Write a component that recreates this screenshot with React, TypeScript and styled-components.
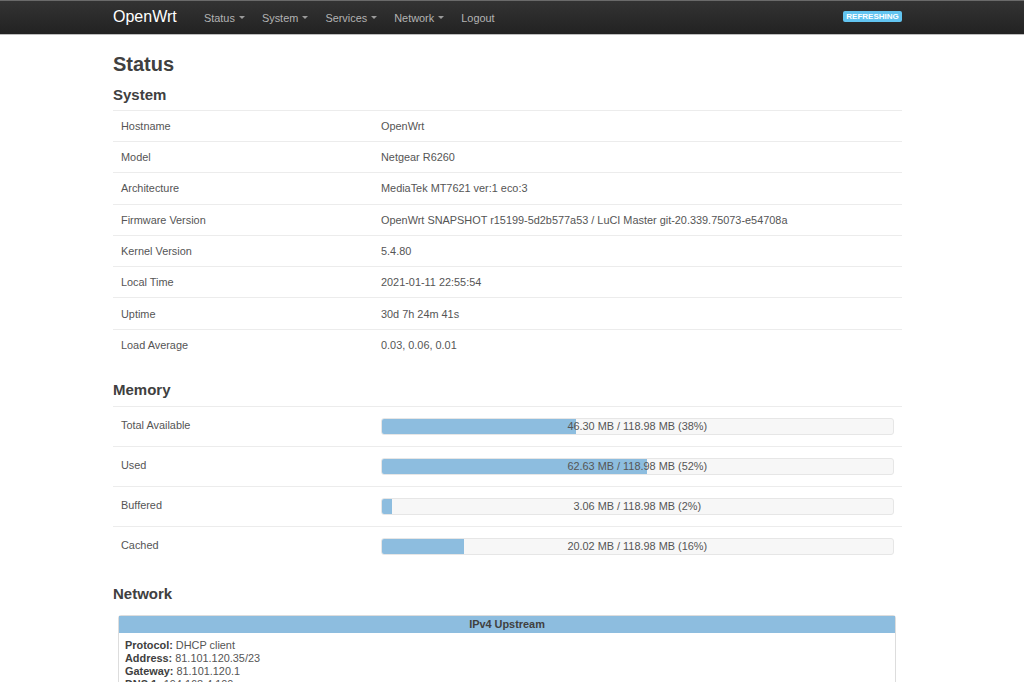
import styled, { createGlobalStyle } from 'styled-components';

const GlobalStyle = createGlobalStyle`
  html, body {
    margin: 0;
    height: 682px;
    overflow: hidden;
    background: #fff;
    color: #404040;
    font-family: "Liberation Sans", Arial, sans-serif;
    font-size: 10.9px;
  }
`;

const systemRows = [
  ['Hostname', 'OpenWrt'],
  ['Model', 'Netgear R6260'],
  ['Architecture', 'MediaTek MT7621 ver:1 eco:3'],
  ['Firmware Version', 'OpenWrt SNAPSHOT r15199-5d2b577a53 / LuCI Master git-20.339.75073-e54708a'],
  ['Kernel Version', '5.4.80'],
  ['Local Time', '2021-01-11 22:55:54'],
  ['Uptime', '30d 7h 24m 41s'],
  ['Load Average', '0.03, 0.06, 0.01'],
];

const memoryRows = [
  { label: 'Total Available', text: '46.30 MB / 118.98 MB (38%)', percent: 38 },
  { label: 'Used', text: '62.63 MB / 118.98 MB (52%)', percent: 52 },
  { label: 'Buffered', text: '3.06 MB / 118.98 MB (2%)', percent: 2 },
  { label: 'Cached', text: '20.02 MB / 118.98 MB (16%)', percent: 16 },
];

const upstream = [
  ['Protocol:', 'DHCP client'],
  ['Address:', '81.101.120.35/23'],
  ['Gateway:', '81.101.120.1'],
  ['DNS 1:', '194.168.4.100'],
];

const navItems = ['Status', 'System', 'Services', 'Network'];

export default function App() {
  return (
    <>
      <GlobalStyle />
      <NavBar>
        <NavInner>
          <Brand>OpenWrt</Brand>
          <NavList>
            {navItems.map(item => (
              <NavItem key={item}>
                {item}
                <Caret />
              </NavItem>
            ))}
            <NavItem>Logout</NavItem>
          </NavList>
          <Badge>REFRESHING</Badge>
        </NavInner>
      </NavBar>

      <Main>
        <PageTitle>Status</PageTitle>

        <SectionTitle>System</SectionTitle>
        <Table>
          {systemRows.map(([label, value]) => (
            <Row key={label}>
              <Label>{label}</Label>
              <Value>{value}</Value>
            </Row>
          ))}
        </Table>

        <MemoryTitle>Memory</MemoryTitle>
        <Table>
          {memoryRows.map(row => (
            <MemoryRow key={row.label}>
              <MemoryLabel>{row.label}</MemoryLabel>
              <Progress>
                <ProgressFill style={{ width: `${row.percent}%` }} />
                <ProgressText>{row.text}</ProgressText>
              </Progress>
            </MemoryRow>
          ))}
        </Table>

        <NetworkTitle>Network</NetworkTitle>
        <Panel>
          <PanelHead>IPv4 Upstream</PanelHead>
          <PanelBody>
            {upstream.map(([key, value]) => (
              <div key={key}>
                <strong>{key}</strong> {value}
              </div>
            ))}
          </PanelBody>
        </Panel>
      </Main>
    </>
  );
}

const NavBar = styled.header`
  height: 35px;
  box-sizing: border-box;
  border-top: 1px solid #6a6a6a;
  border-bottom: 1px solid #bdbdbd;
  background: linear-gradient(#333333, #222222);
`;

const NavInner = styled.div`
  width: 789px;
  height: 100%;
  margin-left: 113px;
  display: flex;
  align-items: center;
`;

const Brand = styled.div`
  width: 91px;
  margin-bottom: 2px;
  font-size: 16px;
  color: #ffffff;
`;

const NavList = styled.nav`
  display: flex;
  gap: 17.1px;
  flex: 1;
`;

const NavItem = styled.span`
  display: flex;
  align-items: center;
  font-size: 10.9px;
  color: #b3b3b3;
`;

const Caret = styled.i`
  width: 0;
  height: 0;
  margin-left: 4px;
  border-top: 3px solid #9a9a9a;
  border-left: 3px solid transparent;
  border-right: 3px solid transparent;
`;

const Badge = styled.span`
  box-sizing: border-box;
  width: 59px;
  height: 11px;
  margin-bottom: 2px;
  border-radius: 2px;
  background: #62c4f0;
  color: #ffffff;
  font-size: 8px;
  font-weight: bold;
  line-height: 11px;
  text-align: center;
`;

const Main = styled.main`
  width: 789px;
  margin-left: 113px;
  display: flex;
  flex-direction: column;
`;

const PageTitle = styled.h1`
  margin: 17px 0 0;
  font-size: 20px;
  line-height: 24px;
  font-weight: bold;
  color: #404040;
`;

const SectionTitle = styled.h2`
  margin: 9px 0 0;
  height: 24.7px;
  font-size: 15px;
  line-height: 19px;
  font-weight: bold;
  color: #404040;
`;

const MemoryTitle = styled(SectionTitle)`
  margin-top: 20px;
  height: 25.7px;
`;

const NetworkTitle = styled(SectionTitle)`
  margin-top: 18.6px;
  height: 31px;
`;

const Table = styled.div`
  display: flex;
  flex-direction: column;
`;

const Row = styled.div`
  display: flex;
  align-items: center;
  height: 31.3px;
  box-sizing: border-box;
  border-top: 1px solid #ececec;
`;

const MemoryRow = styled(Row)`
  height: 40px;
`;

const Label = styled.div`
  width: 260px;
  padding-left: 8px;
  box-sizing: content-box;
  flex-shrink: 0;
  color: #555555;
`;

const MemoryLabel = styled(Label)`
  padding-bottom: 2px;
`;

const Value = styled.div`
  color: #555555;
`;

const Progress = styled.div`
  position: relative;
  width: 512.5px;
  height: 17px;
  box-sizing: border-box;
  border: 1px solid #e6e6e6;
  border-radius: 3px;
  background: #f7f7f7;
  overflow: hidden;
`;

const ProgressFill = styled.div`
  height: 100%;
  background: #8dbddf;
`;

const ProgressText = styled.div`
  position: absolute;
  inset: 0;
  line-height: 15px;
  text-align: center;
  color: #555555;
`;

const Panel = styled.section`
  width: 778px;
  margin-left: 5px;
  box-sizing: border-box;
  border: 1px solid #dddddd;
  border-radius: 3px;
`;

const PanelHead = styled.div`
  height: 17px;
  background: #8dbddf;
  font-weight: bold;
  line-height: 17px;
  text-align: center;
  color: #404040;
`;

const PanelBody = styled.div`
  padding: 6px 6px;
  line-height: 12.8px;
  color: #555555;

  strong {
    color: #404040;
  }
`;
